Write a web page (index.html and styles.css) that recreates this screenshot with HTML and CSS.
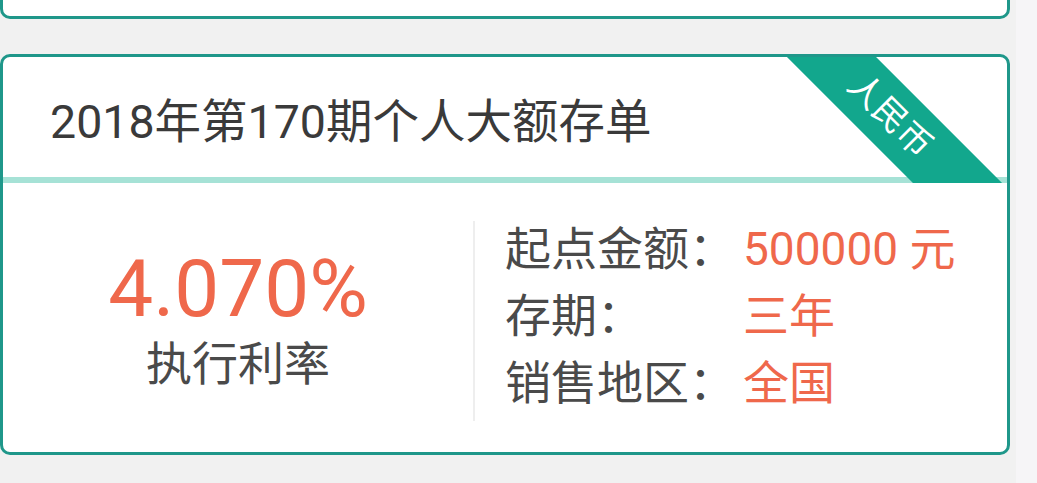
FILE: index.html
```html
<!DOCTYPE html>
<html lang="zh-CN">
<head>
  <meta charset="UTF-8">
  <title>大额存单</title>
  <meta name="viewport" content="width=device-width, initial-scale=1.0">
  <link rel="stylesheet" href="styles.css">
</head>
<body>
  <div class="page">
    <div class="card card-prev"></div>

    <div class="card">
      <div class="card-head">
        <h2>2018年第170期个人大额存单</h2>
        <div class="ribbon">人民币</div>
      </div>
      <div class="card-body">
        <div class="rate">
          <div class="rate-num">4.070%</div>
          <div class="rate-label">执行利率</div>
        </div>
        <div class="info">
          <span class="info-key">起点金额：</span>
          <span class="info-val">500000 元</span>
          <span class="info-key">存期：</span>
          <span class="info-val">三年</span>
          <span class="info-key">销售地区：</span>
          <span class="info-val">全国</span>
        </div>
      </div>
    </div>
  </div>
</body>
</html>
```

FILE: styles.css
```css
:root {
  --bg: #f1f1f1;
  --teal: #1f978a;
  --ribbon: #12a78d;
  --line: #a6e2d6;
  --orange: #ef684b;
  --text: #3a3a3a;
  --gray: #4a4a4a;
}

body {
  margin: 0;
  padding: 0;
  background: #f6f5f7;
  font-family: Roboto, "Noto Sans CJK SC", sans-serif;
  height: 483px;
  overflow: hidden;
}

.page {
  width: 1016px;
  height: 100%;
  background: var(--bg);
  overflow: hidden;
}

.card {
  width: 1010px;
  box-sizing: border-box;
  background: #fff;
  border: 3px solid var(--teal);
  border-radius: 10px;
  margin-top: 35px;
}

.card-prev {
  height: 100px;
  margin-top: -81px;
}

.card-head {
  position: relative;
  overflow: hidden;
  height: 126px;
  box-sizing: border-box;
  padding: 0 0 6px 47px;
  display: flex;
  align-items: center;
  border-radius: 7px 7px 0 0;
}

.card-head::after {
  content: "";
  position: absolute;
  left: 0;
  right: 0;
  bottom: 0;
  height: 6px;
  background: var(--line);
}

.card-head h2 {
  margin: 0;
  font-size: 46.5px;
  font-weight: normal;
  color: var(--text);
}

.ribbon {
  position: absolute;
  z-index: 1;
  left: 727px;
  top: 27px;
  width: 320px;
  height: 63px;
  line-height: 63px;
  background: var(--ribbon);
  color: #fff;
  font-size: 34px;
  text-align: center;
  transform: rotate(45deg);
}

.card-body {
  display: flex;
  height: 269px;
}

.rate {
  width: 470px;
  display: flex;
  flex-direction: column;
  align-items: center;
  justify-content: center;
  padding-top: 8px;
  box-sizing: border-box;
}

.rate-num {
  font-size: 80px;
  line-height: 84px;
  color: var(--orange);
}

.rate-label {
  font-size: 46px;
  line-height: 66px;
  color: var(--gray);
}

.info {
  margin: 38px 0 31px;
  border-left: 2px solid #eee;
  padding-left: 30px;
  display: grid;
  grid-template-columns: 238px auto;
  grid-auto-rows: 67px;
  align-items: start;
  font-size: 46px;
  line-height: 57px;
}

.info-key {
  color: var(--gray);
}

.info-val {
  color: var(--orange);
}
```
